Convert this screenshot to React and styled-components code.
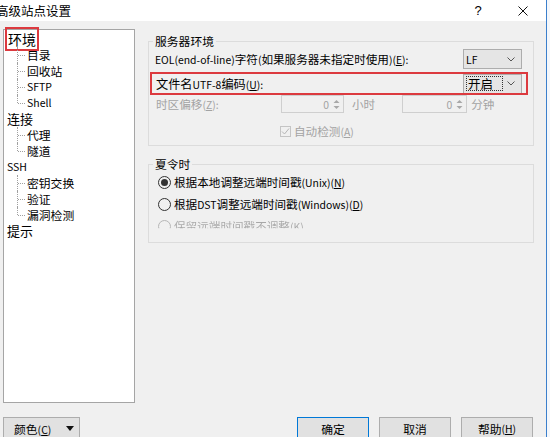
import styled, { createGlobalStyle } from "styled-components";

const GlobalStyle = createGlobalStyle`
  html, body {
    margin: 0;
    padding: 0;
  }
  body {
    width: 550px;
    height: 437px;
    overflow: hidden;
    background: #f4f7fb;
    font-family: "Noto Sans CJK SC", "Noto Sans", sans-serif;
    font-size: 11.6px;
    color: #000;
  }
`;

const Screen = styled.div`
    display: flex;
    width: 550px;
    height: 437px;
    overflow: hidden;
`;

const Dialog = styled.div`
    width: 546px;
    height: 437px;
    flex-shrink: 0;
    background: #f0f0f0;
    border-right: 1px solid #3b7fcc;
    display: flex;
    flex-direction: column;
    overflow: hidden;
`;

const TitleBar = styled.div`
    height: 21px;
    background: #fff;
    display: flex;
    align-items: center;
    padding-right: 13px;
`;

const Title = styled.div`
    flex: 1;
    margin-left: -4px;
    font-size: 12.5px;
    line-height: 21px;
    white-space: nowrap;
`;

const CaptionButton = styled.div`
    width: 20px;
    height: 21px;
    display: flex;
    align-items: center;
    justify-content: center;
    font-family: "Liberation Sans", sans-serif;
    font-size: 13px;
    margin-left: ${(p) => (p.gap ? "25px" : "0")};
`;

const Main = styled.div`
    height: 396px;
    display: flex;
    padding: 8px 0 0 3px;
    box-sizing: border-box;
`;

const Tree = styled.div`
    width: 132px;
    height: 374px;
    box-sizing: border-box;
    border: 1px solid #a5a5a5;
    background: #fff;
    padding-top: 1px;
`;

const TreeRow = styled.div`
    position: relative;
    height: 16px;
    line-height: 16px;
    white-space: nowrap;
    padding-left: ${(p) => (p.child ? "23px" : "3px")};
    font-size: ${(p) => (p.latin ? "10.5px" : p.child ? "11.8px" : "13px")};
    ${(p) =>
        p.child
            ? `
    &::before {
        content: "";
        position: absolute;
        left: 13px;
        top: 0;
        height: ${p.last ? "8px" : "16px"};
        border-left: 1px dotted #a0a0a0;
    }
    &::after {
        content: "";
        position: absolute;
        left: 14px;
        top: 8px;
        width: 7px;
        border-top: 1px dotted #a0a0a0;
    }
  `
            : ""}
`;

const Selected = styled.span`
    font-size: 14px;
    outline: 2px solid #dc3a3f;
    padding: 0 1px;
`;

const RightPanel = styled.div`
    width: 386px;
    margin-left: 13px;
`;

const Group = styled.fieldset`
    margin: ${(p) => (p.first ? "5px" : "11px")} 0 0;
    padding: 0 0 ${(p) => (p.first ? "4px" : "5px")};
    border: 1px solid #dcdcdc;
    min-width: 0;
`;

const Legend = styled.legend`
    margin-left: 4px;
    padding: 0 2px;
    font-size: 11.8px;
    line-height: 14px;
`;

const Lat = styled.span`
    font-size: 10.4px;
`;

const Row = styled.div`
    display: flex;
    align-items: center;
    white-space: nowrap;
    height: ${(p) => p.h || 22}px;
    margin-top: ${(p) => p.top || 0}px;
    padding-left: ${(p) => p.pl || 6}px;
    padding-right: ${(p) => p.pr || 11}px;
    color: ${(p) => (p.disabled ? "#a3a3a3" : "#000")};
`;

const MarkedRow = styled(Row)`
    margin-left: 1px;
    margin-right: 5px;
    outline: 2px solid #dc3a3f;
    outline-offset: -2px;
    padding-right: 6px;
    font-size: 12.2px;
`;

const Label = styled.span`
    flex: ${(p) => (p.w ? "none" : "1")};
    width: ${(p) => (p.w ? `${p.w}px` : "auto")};
`;

const Select = styled.div`
    width: 59px;
    height: 20px;
    box-sizing: border-box;
    border: 1px solid #adadad;
    background: #e5e5e5;
    display: flex;
    align-items: center;
    justify-content: space-between;
    padding: 0 6px 0 2px;
    font-size: 11.6px;
    color: #000;
`;

const FocusText = styled.span`
    width: 37px;
    height: 15px;
    box-sizing: border-box;
    border: 1px dotted #333;
    line-height: 13px;
    padding-left: 1px;
    font-size: 12.5px;
`;

const SpinBox = styled.div`
    width: ${(p) => p.w}px;
    height: 18px;
    box-sizing: border-box;
    margin-left: ${(p) => p.ml || 0}px;
    border: 1px solid #cfcfcf;
    display: flex;
    align-items: center;
    justify-content: flex-end;
    padding-right: 2px;
    color: #a3a3a3;
    svg {
        margin-left: 3px;
    }
`;

const Unit = styled.span`
    margin-left: ${(p) => p.ml}px;
`;

const CheckBox = styled.span`
    width: 11px;
    height: 11px;
    box-sizing: border-box;
    border: 1px solid #c4c4c4;
    display: flex;
    align-items: center;
    justify-content: center;
    margin-right: 3px;
`;

const Radio = styled.span`
    width: 13px;
    height: 13px;
    box-sizing: border-box;
    border-radius: 50%;
    border: 1px solid #333;
    display: flex;
    align-items: center;
    justify-content: center;
    margin-right: 3px;
    flex-shrink: 0;
    &::after {
        content: "";
        width: 7px;
        height: 7px;
        border-radius: 50%;
        background: ${(p) => (p.checked ? "#333" : "transparent")};
    }
`;

const FadedRow = styled(Row)`
    opacity: 0.3;
    filter: blur(0.7px);
    clip-path: inset(0 0 40% 0);
`;

const Footer = styled.div`
    height: 20px;
    display: flex;
    align-items: flex-start;
    padding: 0 13px 0 3px;
`;

const Button = styled.div`
    width: ${(p) => p.w || 72}px;
    height: 23px;
    box-sizing: border-box;
    margin-left: ${(p) => p.ml || 0}px;
    border: 1px solid ${(p) => (p.primary ? "#0078d7" : "#adadad")};
    background: #e1e1e1;
    display: flex;
    align-items: center;
    justify-content: center;
    font-size: 11.8px;
`;

const ColorButton = styled(Button)`
    justify-content: space-between;
    padding: 0 5px 0 10px;
`;

const Spacer = styled.div`
    flex: 1;
`;

const Chevron = () => (
    <svg width="8" height="5" viewBox="0 0 8 5">
        <path d="M0.5 0.5 L4 4 L7.5 0.5" stroke="#555" fill="none" />
    </svg>
);

const SpinArrows = () => (
    <svg width="9" height="13" viewBox="0 0 9 13">
        <path d="M1.5 5 L4.5 2 L7.5 5 Z" fill="#a8a8a8" />
        <path d="M1.5 8 L4.5 11 L7.5 8 Z" fill="#a8a8a8" />
    </svg>
);

const tree = [
    { text: "环境", selected: true },
    { text: "目录", child: true },
    { text: "回收站", child: true },
    { text: "SFTP", child: true, latin: true },
    { text: "Shell", child: true, last: true, latin: true },
    { text: "连接" },
    { text: "代理", child: true },
    { text: "隧道", child: true, last: true },
    { text: "SSH", latin: true },
    { text: "密钥交换", child: true },
    { text: "验证", child: true },
    { text: "漏洞检测", child: true, last: true },
    { text: "提示" },
];

export default function App() {
    return (
        <Screen>
            <GlobalStyle />
            <Dialog>
                <TitleBar>
                    <Title>高级站点设置</Title>
                    <CaptionButton>?</CaptionButton>
                    <CaptionButton gap>
                        <svg width="10" height="10" viewBox="0 0 10 10">
                            <path d="M0.5 0.5 L9.5 9.5 M9.5 0.5 L0.5 9.5" stroke="#111" strokeWidth="1" />
                        </svg>
                    </CaptionButton>
                </TitleBar>
                <Main>
                    <Tree>
                        {tree.map((item) => (
                            <TreeRow key={item.text} child={item.child} last={item.last} latin={item.latin}>
                                {item.selected ? <Selected>{item.text}</Selected> : item.text}
                            </TreeRow>
                        ))}
                    </Tree>
                    <RightPanel>
                        <Group first>
                            <Legend>服务器环境</Legend>
                            <Row>
                                <Label>
                                    <Lat>EOL(end-of-line)</Lat>字符<Lat>(</Lat>如果服务器未指定时使用<Lat>)(<u>E</u>):</Lat>
                                </Label>
                                <Select>
                                    <Lat>LF</Lat>
                                    <Chevron />
                                </Select>
                            </Row>
                            <MarkedRow h={23} top={2} pl={6}>
                                <Label>
                                    文件名<Lat>UTF-8</Lat>编码<Lat>(<u>U</u>):</Lat>
                                </Label>
                                <Select>
                                    <FocusText>开启</FocusText>
                                    <Chevron />
                                </Select>
                            </MarkedRow>
                            <Row h={18} pl={7} disabled>
                                <Label w={125}>
                                    时区偏移<Lat>(<u>Z</u>):</Lat>
                                </Label>
                                <SpinBox w={63}>
                                    <Lat>0</Lat>
                                    <SpinArrows />
                                </SpinBox>
                                <Unit ml={8}>小时</Unit>
                                <SpinBox w={65} ml={27}>
                                    <Lat>0</Lat>
                                    <SpinArrows />
                                </SpinBox>
                                <Unit ml={4}>分钟</Unit>
                            </Row>
                            <Row h={20} top={8} pl={131} disabled>
                                <CheckBox>
                                    <svg width="9" height="9" viewBox="0 0 9 9">
                                        <path d="M1 4.5 L3.5 7 L8 1.5" stroke="#b5b5b5" fill="none" />
                                    </svg>
                                </CheckBox>
                                <span>
                                    自动检测<Lat>(<u>A</u>)</Lat>
                                </span>
                            </Row>
                        </Group>
                        <Group>
                            <Legend>夏令时</Legend>
                            <Row pl={9}>
                                <Radio checked />
                                <span>
                                    根据本地调整远端时间戳<Lat>(Unix)(<u>N</u>)</Lat>
                                </span>
                            </Row>
                            <Row pl={9}>
                                <Radio />
                                <span>
                                    根据<Lat>DST</Lat>调整远端时间戳<Lat>(Windows)(<u>D</u>)</Lat>
                                </span>
                            </Row>
                            <FadedRow pl={9}>
                                <Radio />
                                <span>
                                    保留远端时间戳不调整<Lat>(K)</Lat>
                                </span>
                            </FadedRow>
                        </Group>
                    </RightPanel>
                </Main>
                <Footer>
                    <ColorButton w={77}>
                        <span>
                            颜色<Lat>(<u>C</u>)</Lat>
                        </span>
                        <svg width="8" height="5" viewBox="0 0 8 5">
                            <path d="M0 0 L8 0 L4 5 Z" fill="#111" />
                        </svg>
                    </ColorButton>
                    <Spacer />
                    <Button primary>确定</Button>
                    <Button ml={10}>取消</Button>
                    <Button ml={10}>
                        帮助<Lat>(<u>H</u>)</Lat>
                    </Button>
                </Footer>
            </Dialog>
        </Screen>
    );
}
